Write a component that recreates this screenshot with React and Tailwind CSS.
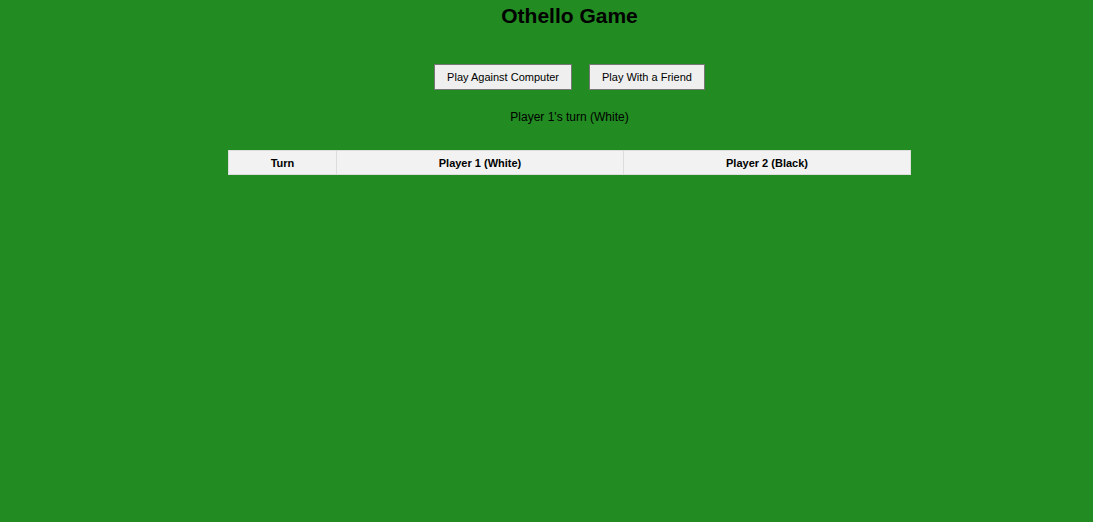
export default function App() {
  return (
    <div className="min-h-screen bg-[#228b22] pl-[46px] flex flex-col items-center text-black" style={{ fontFamily: '"Liberation Sans", Arial, sans-serif' }}>
      <h1 className="mt-[4px] text-[21px] leading-[24px] font-bold">Othello Game</h1>

      <div className="mt-[36px] flex gap-[17px]">
        <button className="h-[26px] px-[12px] border border-[#767676] bg-[#efefef] text-[11px]">
          Play Against Computer
        </button>
        <button className="h-[26px] px-[12px] border border-[#767676] bg-[#efefef] text-[11px]">
          Play With a Friend
        </button>
      </div>

      <p className="mt-[20px] text-[12px] leading-[14px]">Player 1's turn (White)</p>

      <table className="mt-[26px] w-[683px] border-collapse text-[11px]">
        <thead>
          <tr className="bg-[#f2f2f2]">
            <th className="w-[108px] h-[24px] p-0 pt-[2px] border border-[#ddd] font-bold">Turn</th>
            <th className="p-0 pt-[2px] border border-[#ddd] font-bold">Player 1 (White)</th>
            <th className="w-[287px] p-0 pt-[2px] border border-[#ddd] font-bold">Player 2 (Black)</th>
          </tr>
        </thead>
        <tbody></tbody>
      </table>
    </div>
  );
}
